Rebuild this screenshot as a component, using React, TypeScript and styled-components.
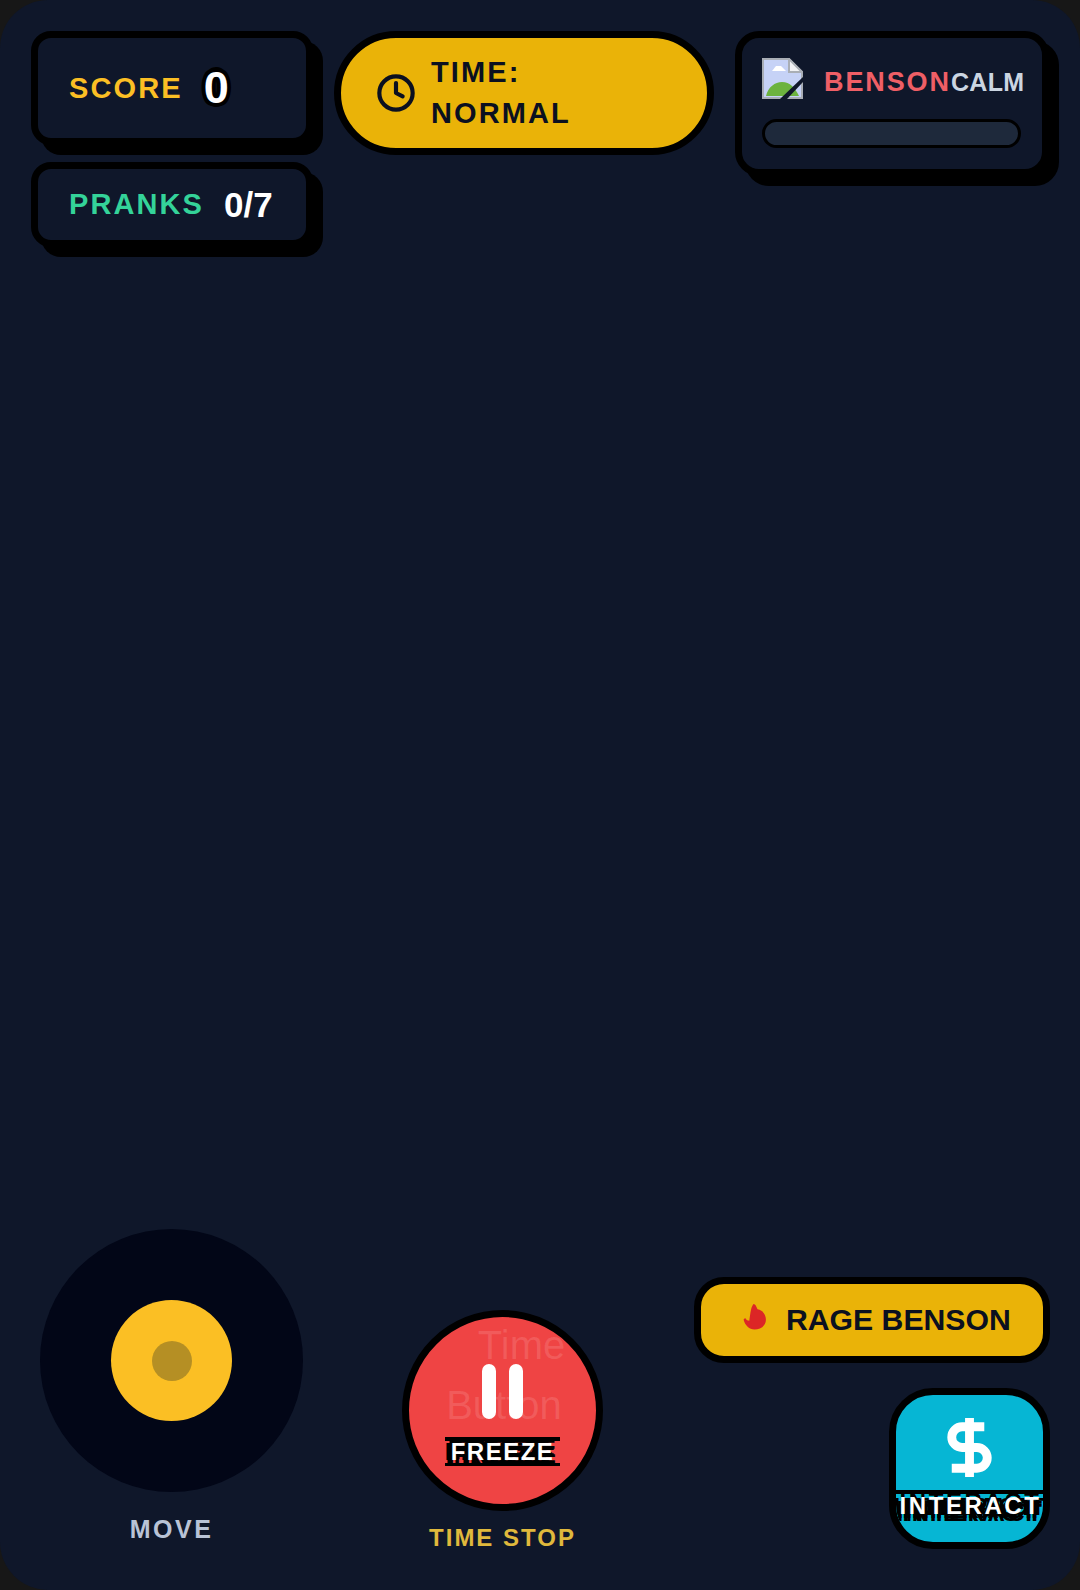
import React from 'react';
import styled, { createGlobalStyle } from 'styled-components';
import { Clock, DollarSign } from 'lucide-react';

const GlobalStyle = createGlobalStyle`
  html, body {
    margin: 0;
    padding: 0;
    background: #171717;
  }
  * {
    box-sizing: border-box;
  }
`;

const Shell = styled.div`
  width: 1080px;
  height: 1590px;
  border-radius: 48px;
  background: #0f172a;
  overflow: hidden;
  display: flex;
  flex-direction: column;
  justify-content: space-between;
  font-family: 'Liberation Sans', Arial, sans-serif;
  font-weight: 700;
`;

const TopBar = styled.div`
  display: flex;
  align-items: flex-start;
  padding: 31px 0 0 31px;
`;

const StatColumn = styled.div`
  width: 282px;
  display: flex;
  flex-direction: column;
  gap: 17px;
`;

const StatCard = styled.div<{ $compact?: boolean }>`
  display: flex;
  align-items: center;
  gap: 20px;
  height: ${(p) => (p.$compact ? 85 : 114)}px;
  padding: 0 24px 0 31px;
  background: #0f172a;
  border: 7px solid #000;
  border-radius: 20px;
  box-shadow: 10px 10px 0 #000;
`;

const StatLabel = styled.span<{ $color: string }>`
  color: ${(p) => p.$color};
  font-size: 29px;
  letter-spacing: 2.1px;
`;

const ScoreValue = styled.span`
  color: #fff;
  font-size: 45px;
  margin-left: 1px;
  text-shadow: 3px 3px 0 #000, -3px -3px 0 #000, 3px -3px 0 #000, -3px 3px 0 #000, 0 4px 0 #000, 0 -5px 0 #000,
    4px 0 0 #000, -4px 0 0 #000;
`;

const PranksValue = styled.span`
  color: #fff;
  font-size: 35px;
`;

const TimePill = styled.div`
  width: 380px;
  height: 124px;
  margin-left: 21px;
  display: flex;
  align-items: center;
  gap: 15px;
  padding-left: 35px;
  background: #eab308;
  border: 7px solid #000;
  border-radius: 62px;
  color: #0b1020;
`;

const TimeText = styled.span`
  max-width: 180px;
  font-size: 29px;
  line-height: 41px;
  letter-spacing: 2.1px;
`;

const BensonCard = styled.div`
  width: 314px;
  height: 145px;
  margin-left: 21px;
  padding: 20px 21px 0 20px;
  background: #0f172a;
  border: 7px solid #000;
  border-radius: 24px;
  box-shadow: 10px 10px 0 #000;
`;

const BensonHeader = styled.div`
  display: flex;
  align-items: center;
  height: 40px;
  gap: 21px;
`;

const BrokenShape = styled.svg`
  flex-shrink: 0;
`;

const BensonNames = styled.div`
  display: flex;
  align-items: center;
  flex-shrink: 0;
  padding-top: 8px;
`;

const BensonName = styled.span`
  font-size: 27px;
  letter-spacing: 1.9px;
  color: #ef5f66;
`;

const BensonMood = styled.span`
  color: #cbd5e1;
  font-size: 25px;
  letter-spacing: 0.3px;
`;

const AngerBar = styled.div`
  height: 29px;
  margin-top: 21px;
  background: #1e293b;
  border: 3px solid #000;
  border-radius: 15px;
`;

const BottomBar = styled.div`
  display: flex;
  align-items: flex-end;
  padding: 0 30px 41px 40px;
`;

const StickColumn = styled.div`
  width: 263px;
  display: flex;
  flex-direction: column;
  align-items: center;
  gap: 23px;
  margin-bottom: 6px;
`;

const StickBase = styled.div`
  width: 263px;
  height: 263px;
  border-radius: 50%;
  background: #020617;
  display: flex;
  align-items: center;
  justify-content: center;
`;

const StickKnob = styled.div`
  width: 121px;
  height: 121px;
  border-radius: 50%;
  background: #fbbf24;
  display: flex;
  align-items: center;
  justify-content: center;
`;

const StickDot = styled.div`
  width: 40px;
  height: 40px;
  border-radius: 50%;
  background: #b58f24;
`;

const CaptionLabel = styled.span<{ $color: string; $spacing: number; $size: number }>`
  color: ${(p) => p.$color};
  font-size: ${(p) => p.$size}px;
  line-height: 28px;
  letter-spacing: ${(p) => p.$spacing}px;
`;

const FreezeColumn = styled.div`
  width: 201px;
  margin-left: 99px;
  display: flex;
  flex-direction: column;
  align-items: center;
  gap: 13px;
  margin-bottom: -3px;
`;

const FreezeButton = styled.div`
  position: relative;
  width: 201px;
  height: 201px;
  padding-top: 9px;
  border-radius: 50%;
  background: #ef4444;
  border: 7px solid #000;
  display: flex;
  flex-direction: column;
  align-items: center;
  justify-content: center;
  gap: 18px;
`;

const GhostAlt = styled.span`
  position: absolute;
  left: 20px;
  top: -2px;
  width: 150px;
  text-align: center;
  color: rgba(255, 255, 255, 0.13);
  font-size: 40px;
  font-weight: 400;
  line-height: 60px;
`;

const GhostGap = styled.span`
  display: inline-block;
  width: 35px;
`;

const PauseIcon = styled.div`
  position: relative;
  display: flex;
  gap: 13px;
`;

const PauseBar = styled.div`
  width: 14px;
  height: 55px;
  border-radius: 7px;
  background: #fff;
`;

const FreezeLabel = styled.span`
  position: relative;
  padding: 0 6px;
  border-top: 4px solid #000;
  border-bottom: 3px solid #000;
  color: #fff;
  font-size: 24px;
  line-height: 22px;
  letter-spacing: 1.5px;
  text-shadow: -3px 3px 0 #000, 3px -3px 0 #000, -6px 0 0 #000, 3px 3px 0 #000, 0 -5px 0 #000, -5px 5px 0 #000,
    -3px -3px 0 #000;
`;

const ActionColumn = styled.div`
  margin-left: auto;
  display: flex;
  flex-direction: column;
  align-items: flex-end;
  gap: 25px;
`;

const RageButton = styled.div`
  width: 356px;
  height: 86px;
  display: flex;
  align-items: center;
  gap: 19px;
  padding-left: 42px;
  background: #eab308;
  border: 7px solid #000;
  border-radius: 30px;
  color: #0b1020;
  font-size: 30.2px;
`;

const FlameShape = styled.svg`
  margin-top: -6px;
`;

const InteractButton = styled.div`
  width: 161px;
  height: 161px;
  border: 7px solid #000;
  border-radius: 44px;
  background: #06b6d4;
  overflow: hidden;
  display: flex;
  flex-direction: column;
  align-items: center;
  color: #fff;
  padding-top: 17px;
`;

const InteractLabel = styled.span`
  width: 100%;
  margin-top: 7px;
  padding-left: 2px;
  text-align: center;
  border-top: 4px solid #000;
  font-size: 24px;
  line-height: 24px;
  letter-spacing: 2.6px;
  white-space: nowrap;
  text-shadow: -3px 7px 0 #000, 3px 7px 0 #000, -3px 4px 0 #000, 3px 4px 0 #000, 0 -4px 0 #000, -6px 1px 0 #000,
    6px 1px 0 #000;
`;

function BrokenImage() {
  return (
    <BrokenShape width="41" height="41" viewBox="0 0 41 41">
      <path d="M1 1H27L40 14V40H1Z" fill="#c6d2f6" stroke="#a9aeb5" strokeWidth="2" />
      <path d="M27 1V14H40Z" fill="#f1f2f5" stroke="#a9aeb5" strokeWidth="2" />
      <path d="M10 13 L14 8 L19 8 L24 13Z" fill="#fff" />
      <path d="M4 38C6 29 13 24 20 24C28 24 33 30 37 38Z" fill="#6cb33e" />
      <path d="M18 41L41 19V24L25 41Z" fill="#0f172a" />
    </BrokenShape>
  );
}

function FlameIcon() {
  return (
    <FlameShape width="24" height="26" viewBox="13 9 23 25">
      <path
        d="M23 9C25 9 26 12 27 14C32 15 35 19 35 24C35 30 30 33.5 24 33.5C19 33.5 15 30 13.5 24L15 22.5C16 24 17 25 19 25C20 20 20 13 23 9Z"
        fill="#dc2626"
      />
    </FlameShape>
  );
}

export default function App() {
  return (
    <Shell>
      <GlobalStyle />
      <TopBar>
        <StatColumn>
          <StatCard>
            <StatLabel $color="#fbbf24">SCORE</StatLabel>
            <ScoreValue>0</ScoreValue>
          </StatCard>
          <StatCard $compact>
            <StatLabel $color="#34d399">PRANKS</StatLabel>
            <PranksValue>0/7</PranksValue>
          </StatCard>
        </StatColumn>
        <TimePill>
          <Clock size={40} strokeWidth={2.5} />
          <TimeText>TIME: NORMAL</TimeText>
        </TimePill>
        <BensonCard>
          <BensonHeader>
            <BrokenImage />
            <BensonNames>
              <BensonName>BENSON</BensonName>
              <BensonMood>CALM</BensonMood>
            </BensonNames>
          </BensonHeader>
          <AngerBar />
        </BensonCard>
      </TopBar>

      <BottomBar>
        <StickColumn>
          <StickBase>
            <StickKnob>
              <StickDot />
            </StickKnob>
          </StickBase>
          <CaptionLabel $color="#b9c3d6" $size={25} $spacing={2.5}>
            MOVE
          </CaptionLabel>
        </StickColumn>

        <FreezeColumn>
          <FreezeButton>
            <GhostAlt>
              <GhostGap />
              Time Button
            </GhostAlt>
            <PauseIcon>
              <PauseBar />
              <PauseBar />
            </PauseIcon>
            <FreezeLabel>FREEZE</FreezeLabel>
          </FreezeButton>
          <CaptionLabel $color="#e0b93c" $size={24} $spacing={2}>
            TIME STOP
          </CaptionLabel>
        </FreezeColumn>

        <ActionColumn>
          <RageButton>
            <FlameIcon />
            RAGE BENSON
          </RageButton>
          <InteractButton>
            <DollarSign size={71} strokeWidth={3} strokeLinecap="butt" strokeLinejoin="miter" />
            <InteractLabel>INTERACT</InteractLabel>
          </InteractButton>
        </ActionColumn>
      </BottomBar>
    </Shell>
  );
}
